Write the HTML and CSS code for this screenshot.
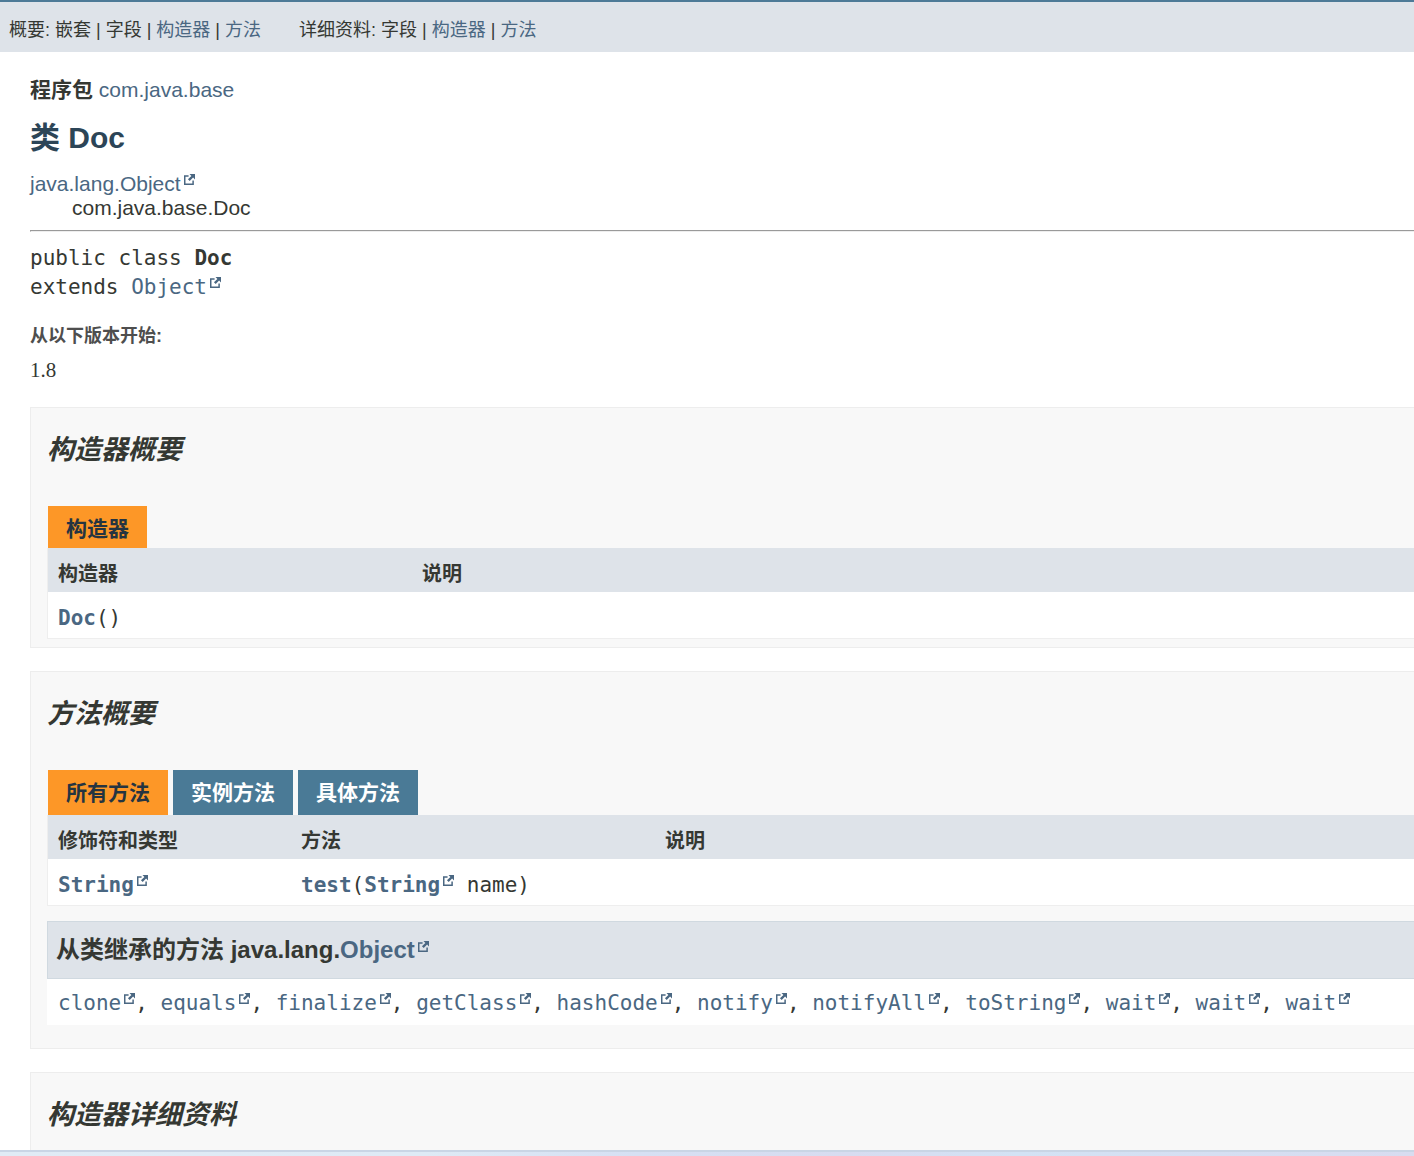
FILE: index.html
```html
<!DOCTYPE html>
<html lang="zh-CN">
<head>
<meta charset="utf-8">
<meta name="viewport" content="width=device-width, initial-scale=1">
<title>Doc</title>
<link rel="stylesheet" href="styles.css">
</head>
<body>
<svg class="sprite" aria-hidden="true">
  <symbol id="ext" viewBox="0 0 768 768"><path d="M584 664H104V184h216V80H0v688h688V448H584zM384 0l132 132-240 240 120 120 240-240 132 132V0z"/></symbol>
</svg>
<header class="sub-nav">
  <nav class="sub-nav-list" aria-label="概要">概要: 嵌套 | 字段 | <a href="#constructor-summary">构造器</a> | <a href="#method-summary">方法</a></nav>
  <nav class="sub-nav-list" aria-label="详细资料">详细资料: 字段 | <a href="#constructor-detail">构造器</a> | <a href="#method-detail">方法</a></nav>
</header>
<main class="content">
  <div class="package"><strong>程序包</strong> <a href="#package">com.java.base</a></div>
  <h1 class="title">类 Doc</h1>
  <div class="inheritance">
    <a href="#object">java.lang.Object<svg class="ext"><use href="#ext"/></svg></a>
    <div class="inheritance-child">com.java.base.Doc</div>
  </div>
  <hr class="rule">
  <div class="signature">public class <strong>Doc</strong><br>extends <a href="#object">Object<svg class="ext"><use href="#ext"/></svg></a></div>
  <dl class="notes">
    <dt>从以下版本开始:</dt>
    <dd>1.8</dd>
  </dl>

  <section class="panel" id="constructor-summary">
    <h2>构造器概要</h2>
    <table class="summary">
      <caption><span class="caption-tab">构造器</span></caption>
      <colgroup><col class="col-member"><col></colgroup>
      <thead><tr><th scope="col">构造器</th><th scope="col">说明</th></tr></thead>
      <tbody><tr><td><a class="member" href="#constructor-detail">Doc</a>()</td><td></td></tr></tbody>
    </table>
  </section>

  <section class="panel inherited-panel" id="method-summary">
    <h2>方法概要</h2>
    <div class="tabs" role="tablist">
      <button class="tab active" type="button" role="tab" aria-selected="true">所有方法</button>
      <button class="tab" type="button" role="tab" aria-selected="false">实例方法</button>
      <button class="tab" type="button" role="tab" aria-selected="false">具体方法</button>
    </div>
    <table class="summary">
      <colgroup><col class="col-type"><col class="col-member"><col></colgroup>
      <thead><tr><th scope="col">修饰符和类型</th><th scope="col">方法</th><th scope="col">说明</th></tr></thead>
      <tbody><tr>
        <td><a class="member" href="#string">String<svg class="ext"><use href="#ext"/></svg></a></td>
        <td><a class="member" href="#test">test</a>(<a class="member" href="#string">String<svg class="ext"><use href="#ext"/></svg></a> name)</td>
        <td></td>
      </tr></tbody>
    </table>
    <div class="inherited">
      <h3>从类继承的方法 java.lang.<a href="#object">Object<svg class="ext"><use href="#ext"/></svg></a></h3>
      <div class="inherited-list"><a href="#clone">clone<svg class="ext"><use href="#ext"/></svg></a>, <a href="#equals">equals<svg class="ext"><use href="#ext"/></svg></a>, <a href="#finalize">finalize<svg class="ext"><use href="#ext"/></svg></a>, <a href="#getClass">getClass<svg class="ext"><use href="#ext"/></svg></a>, <a href="#hashCode">hashCode<svg class="ext"><use href="#ext"/></svg></a>, <a href="#notify">notify<svg class="ext"><use href="#ext"/></svg></a>, <a href="#notifyAll">notifyAll<svg class="ext"><use href="#ext"/></svg></a>, <a href="#toString">toString<svg class="ext"><use href="#ext"/></svg></a>, <a href="#wait">wait<svg class="ext"><use href="#ext"/></svg></a>, <a href="#wait">wait<svg class="ext"><use href="#ext"/></svg></a>, <a href="#wait">wait<svg class="ext"><use href="#ext"/></svg></a></div>
    </div>
  </section>

  <section class="panel" id="constructor-detail">
    <h2>构造器详细资料</h2>
  </section>
</main>
<footer class="bottom-edge"></footer>
</body>
</html>
```

FILE: styles.css
```css
* {
  box-sizing: border-box;
}

body {
  display: flex;
  flex-direction: column;
  height: 100vh;
  margin: 0;
  background: #fff;
  color: #353833;
  font: 21px/24px "Liberation Sans", Arial, "Noto Sans CJK SC", sans-serif;
}

a {
  color: #4a6782;
  text-decoration: none;
}

.sprite {
  position: absolute;
  width: 0;
  height: 0;
}

.ext {
  width: 11px;
  height: 11px;
  margin-left: 3px;
  vertical-align: 6px;
  fill: #4a6782;
}

.sub-nav {
  display: flex;
  flex: none;
  gap: 38px;
  padding: 16px 9px 10px;
  border-top: 2px solid #4d7a97;
  background: #dee3e9;
  font-size: 18px;
}

.content {
  flex: 1;
  min-height: 0;
  padding: 26px 0 0 30px;
  overflow-y: auto;
  scrollbar-width: none;
}

.title {
  margin: 18px 0 16px;
  color: #2c4557;
  font-size: 30px;
  line-height: 36px;
}

.inheritance-child {
  padding-left: 42px;
}

.rule {
  margin: 10px 0 12px;
  border: 1px solid #9a9a9a;
  border-right: 0;
  border-bottom-color: #eee;
}

.signature {
  font-family: "DejaVu Sans Mono", monospace;
  line-height: 29px;
}

.notes {
  margin: 22px 0 25px;
}

.notes dt {
  color: #4e4e4e;
  font-size: 18px;
  font-weight: bold;
}

.notes dd {
  margin: 10px 0 0;
  font-family: Georgia, "Liberation Serif", serif;
}

.panel {
  margin-bottom: 23px;
  padding: 24px 0 8px 16px;
  border: 1px solid #ededed;
  border-right: 0;
  background: #f8f8f8;
}

.inherited-panel {
  padding-bottom: 23px;
}

.panel h2 {
  margin: 0 0 38px;
  font-size: 27px;
  font-style: italic;
  line-height: 36px;
}

.summary {
  width: 100%;
  border: solid #eee;
  border-width: 0 0 1px 1px;
  border-spacing: 0;
  background: #fff;
  table-layout: fixed;
}

.summary caption {
  padding-left: 1px;
  background: #f8f8f8;
  text-align: left;
}

.caption-tab,
.tab {
  display: block;
  width: fit-content;
  padding: 11px 18px 7px;
  background: #fd9727;
  color: #253441;
  font-weight: bold;
}

.tabs {
  display: flex;
  gap: 5px;
  padding-left: 1px;
}

.tab {
  padding-bottom: 10px;
  border: 0;
  background: #4a7a96;
  color: #fff;
  font-family: inherit;
  font-size: 21px;
  line-height: 24px;
}

.tab.active {
  background: #fd9727;
  color: #253441;
}

.col-member {
  width: 364px;
}

.col-type {
  width: 243px;
}

.summary th {
  padding: 14px 10px 6px;
  background: #dee3e9;
  font-size: 20px;
  text-align: left;
}

.summary td {
  padding: 14px 10px 8px;
  font-family: "DejaVu Sans Mono", monospace;
}

.member {
  font-weight: bold;
}

.inherited {
  margin-top: 15px;
}

.inherited h3 {
  margin: 0;
  padding: 16px 8px;
  border: 1px solid #d0d9e0;
  border-right: 0;
  background: #dee3e9;
  font-size: 24px;
}

.inherited-list {
  padding: 12px 11px 10px;
  background: #fff;
  font-family: "DejaVu Sans Mono", monospace;
}

.bottom-edge {
  flex: none;
  height: 6px;
  border-top: 2px solid #c9d5e5;
  background: linear-gradient(90deg, #e0ebf5, #deeaf5 30%, #d6e0f3 45%, #d7dcf0 60%, #d3e2f4 72%, #d8dcf0);
}
```
